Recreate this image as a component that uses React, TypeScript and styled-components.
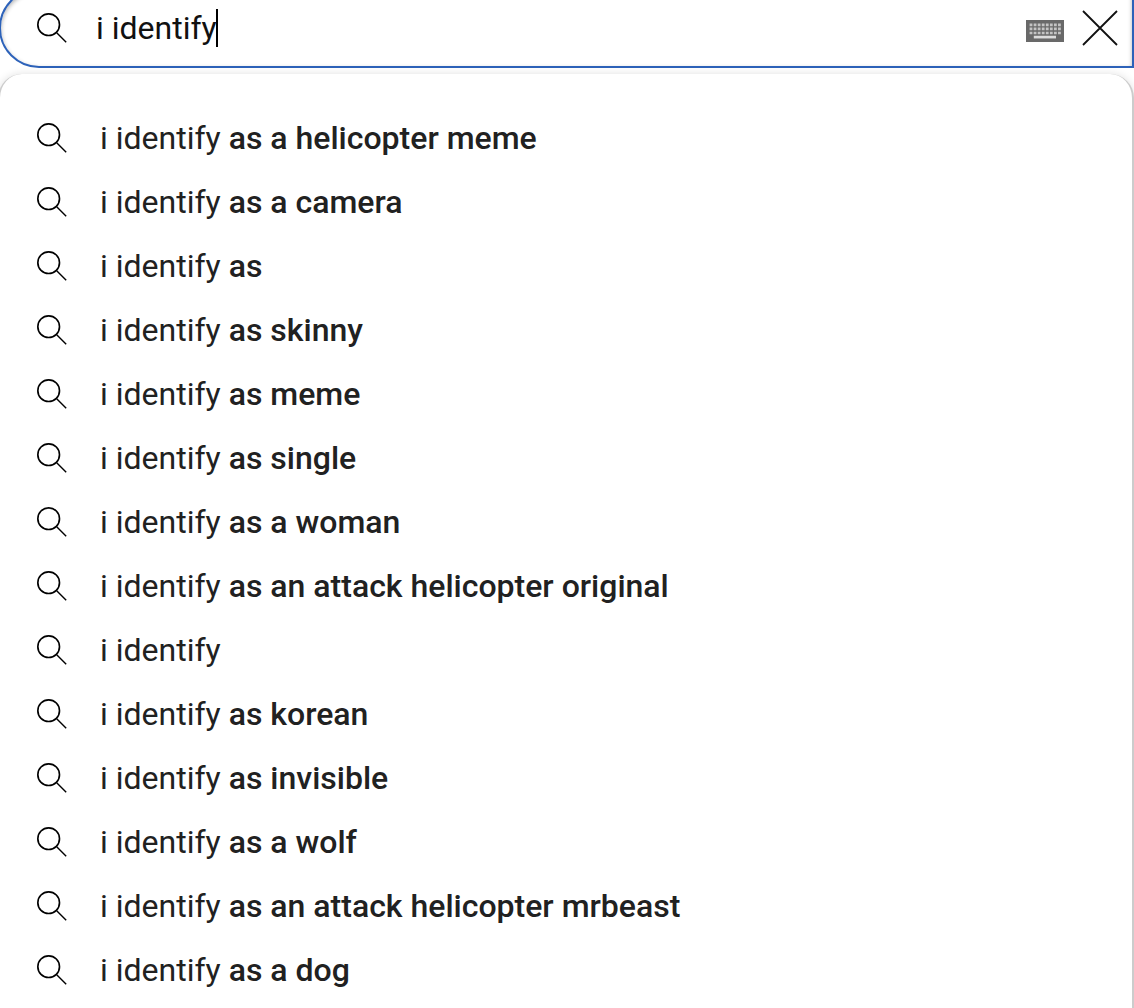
import React from "react";
import styled, {createGlobalStyle} from "styled-components";

const GlobalStyle = createGlobalStyle`
  body {
    margin: 0;
    overflow: hidden;
    background: #fff;
    font-family: Roboto, "Liberation Sans", sans-serif;
  }
`

const Page = styled.div`
  display: flex;
  flex-direction: column;
  gap: 6px;
  height: 1008px;
  overflow: hidden;
`

const SearchBar = styled.div`
  display: flex;
  align-items: center;
  flex-shrink: 0;
  box-sizing: border-box;
  height: 80px;
  margin-top: -12px;
  margin-left: -1px;
  padding: 0 12px 0 31px;
  border: 2px solid #2d62b9;
  border-radius: 40px 0 0 40px;
  box-shadow: inset 0 2px 4px rgba(0, 0, 0, 0.3);
`

const Query = styled.div`
  display: flex;
  align-items: center;
  flex: 1;
  margin-left: 24px;
  color: #111;
  font-size: 32px;
  line-height: 38px;
`

const Caret = styled.span`
  width: 2px;
  height: 38px;
  margin-left: -1px;
  background: #000;
`

const Keyboard = styled.svg`
  width: 38px;
  height: 22px;
  margin: 6px 16px 0 0;
`

const Clear = styled.svg`
  width: 40px;
  height: 40px;
`

const SearchIcon = styled.svg`
  flex-shrink: 0;
  width: 40px;
  height: 40px;
  fill: none;
  stroke: #000;
`

const Suggestions = styled.ul`
  flex: 1 0 auto;
  margin: 0 0 0 -2px;
  padding: 32px 0;
  list-style: none;
  background: #fff;
  border: 2px solid #ccc;
  border-top: 0;
  border-radius: 24px;
  box-shadow: 0 0 8px rgba(0, 0, 0, 0.12);
`

const Suggestion = styled.li`
  display: flex;
  align-items: center;
  gap: 28px;
  height: 64px;
  padding-left: 32px;
  color: #212121;
  font-size: 32px;
  line-height: 44px;
  white-space: pre;
`

const Rest = styled.b`
  font-weight: 500;
`

const suggestions = [
    'as a helicopter meme',
    'as a camera',
    'as',
    'as skinny',
    'as meme',
    'as single',
    'as a woman',
    'as an attack helicopter original',
    '',
    'as korean',
    'as invisible',
    'as a wolf',
    'as an attack helicopter mrbeast',
    'as a dog',
];

function Magnifier() {
    return (
        <SearchIcon viewBox="0 0 24 24">
            <circle cx="10" cy="10" r="6.5"/>
            <path strokeWidth="0.85" d="m14.8 14.8 5.7 5.7"/>
        </SearchIcon>
    );
}

function App() {
    return (
        <>
            <GlobalStyle/>
            <Page>
                <SearchBar>
                    <Magnifier/>
                    <Query>i identify<Caret/></Query>
                    <Keyboard viewBox="0 0 38 22">
                        <path fill="#696969" d="M0 0h38v22H0z"/>
                        <path stroke="#c4c4c4" strokeWidth="2.7" strokeDasharray="2.8 1.26" d="M3.6 4.8h31.3M3.6 8.9h31.3M3.6 13h31.3"/>
                        <path stroke="#dcdcdc" strokeWidth="2.7" d="M7.8 17.1h22.2"/>
                    </Keyboard>
                    <Clear viewBox="0 0 40 40">
                        <path stroke="#111" strokeWidth="1.8" d="M3 3l34 34M37 3L3 37"/>
                    </Clear>
                </SearchBar>
                <Suggestions>
                    {suggestions.map((rest) => (
                        <Suggestion key={rest}>
                            <Magnifier/>
                            <span>i identify <Rest>{rest}</Rest></span>
                        </Suggestion>
                    ))}
                </Suggestions>
            </Page>
        </>
    );
}


export default App;
